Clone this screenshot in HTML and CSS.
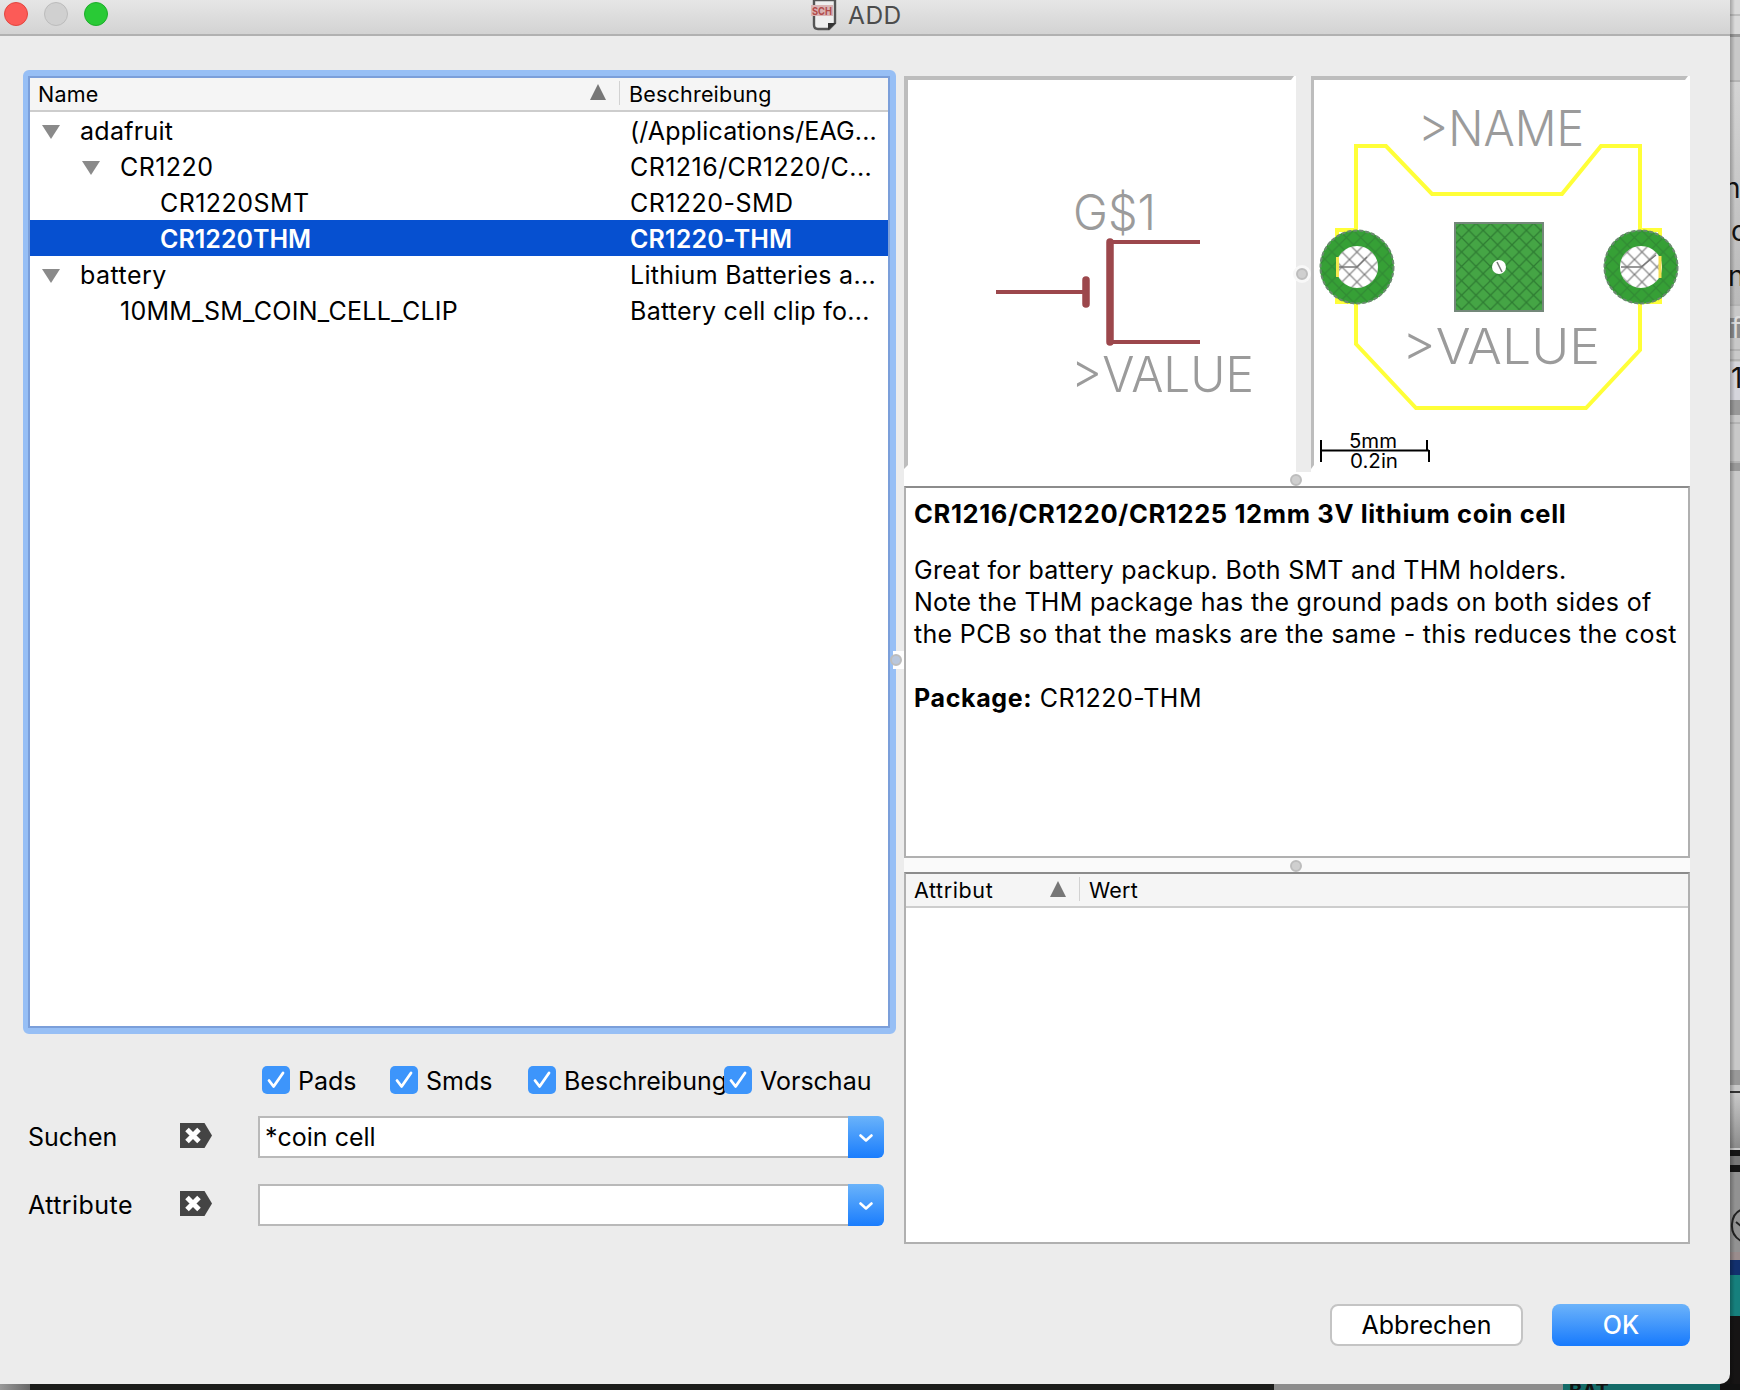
FILE: index.html
```html
<!DOCTYPE html>
<html lang="de">
<head>
<meta charset="utf-8">
<title>ADD</title>
<link rel="stylesheet" href="styles.css">
</head>
<body>
<svg class="defs" width="0" height="0" aria-hidden="true">
  <symbol id="check" viewBox="0 0 28 28"><path d="M7 14.5l4.600 6L21 7" fill="none" stroke="#fff" stroke-width="2.800" stroke-linecap="round" stroke-linejoin="round"/></symbol>
  <symbol id="clear" viewBox="0 0 32 25"><path d="M0 0h24.500l7.500 12.500-7.500 12.500H0z" fill="#444"/><path d="M7 6.500l12 12M19 6.500l-12 12" stroke="#fff" stroke-width="5"/></symbol>
  <symbol id="chevron" viewBox="0 0 14 9"><path d="M1.500 1.500L7 6.500l5.500-5" fill="none" stroke="#fff" stroke-width="2.600" stroke-linecap="round" stroke-linejoin="round"/></symbol>
  <symbol id="down" viewBox="0 0 18 14"><path d="M0 0h18L9 14z" fill="#8a8a8a"/></symbol>
  <symbol id="up" viewBox="0 0 16 16"><path d="M0 16h16L8 0z" fill="#777"/></symbol>
</svg>
<div class="desktop">
  <div class="window">
    <header class="titlebar">
      <div class="lights"><i class="light red"></i><i class="light idle"></i><i class="light green"></i></div>
      <div class="title">
        <svg width="26" height="31" viewBox="0 0 26 31"><path d="M3 0v25q0 4 4 4h11l6-6V0z" fill="#eee" stroke="#555" stroke-width="2.400"/><path d="M17 30v-7h8z" fill="#333"/><rect x="0" y="5" width="22" height="11" fill="#d9b3b3"/><text x="1" y="15" class="icon-label" textLength="20" lengthAdjust="spacingAndGlyphs">SCH</text></svg>
        <span>ADD</span>
      </div>
    </header>
    <main class="content">
      <section class="left">
        <div class="tree">
          <div class="tree-head"><span class="col-name">Name</span><svg class="sort" width="16" height="16"><use href="#up"/></svg><i class="sep"></i><span class="col-desc">Beschreibung</span></div>
          <div class="row"><span class="cell l0"><svg width="18" height="14"><use href="#down"/></svg><span class="mid">adafruit</span></span><span class="tight">(/Applications/EAG...</span></div>
          <div class="row"><span class="cell l1"><svg width="18" height="14"><use href="#down"/></svg><span class="wide">CR1220</span></span><span class="wide">CR1216/CR1220/C...</span></div>
          <div class="row"><span class="cell l2"><span class="wide">CR1220SMT</span></span><span class="wide">CR1220-SMD</span></div>
          <div class="row selected"><span class="cell l2"><span>CR1220THM</span></span><span class="tight">CR1220-THM</span></div>
          <div class="row"><span class="cell l0"><svg width="18" height="14"><use href="#down"/></svg><span class="wide">battery</span></span><span class="mid">Lithium Batteries a...</span></div>
          <div class="row"><span class="cell l3"><span class="mid">10MM_SM_COIN_CELL_CLIP</span></span><span class="mid">Battery cell clip fo...</span></div>
        </div>
        <div class="checks">
          <label><svg class="box"><use href="#check"/></svg>Pads</label>
          <label><svg class="box"><use href="#check"/></svg>Smds</label>
          <label><svg class="box"><use href="#check"/></svg>Beschreibung</label>
          <label><svg class="box"><use href="#check"/></svg>Vorschau</label>
        </div>
        <div class="field"><span class="field-label">Suchen</span><svg class="clear" width="32" height="25"><use href="#clear"/></svg><div class="combo"><span class="combo-text">*coin cell</span><span class="drop"><svg width="14" height="9"><use href="#chevron"/></svg></span></div></div>
        <div class="field"><span class="field-label wide">Attribute</span><svg class="clear" width="32" height="25"><use href="#clear"/></svg><div class="combo"><span class="combo-text"></span><span class="drop"><svg width="14" height="9"><use href="#chevron"/></svg></span></div></div>
      </section>
      <div class="split-main"><i class="knob"></i></div>
      <section class="right">
        <div class="previews">
          <div class="preview">
            <svg width="392" height="396" viewBox="904 76 392 396">
              <path d="M904 76h390l-3 4H908v385l-4 4z" fill="#bdbdbd"/>
              <g fill="none" stroke="#9c474c" stroke-width="4">
                <path d="M996 292h90M1110 242h90M1110 342h90"/>
                <path d="M1086 280v24M1110 242v100" stroke-width="7.500" stroke-linecap="round"/>
              </g>
              <text class="cad" x="1073" y="230" font-size="49" textLength="83" lengthAdjust="spacingAndGlyphs">G$1</text>
              <text class="cad" x="1071" y="392" font-size="49" textLength="183" lengthAdjust="spacingAndGlyphs">&gt;VALUE</text>
            </svg>
          </div>
          <div class="split-v"><i class="knob"></i></div>
          <div class="preview">
            <svg width="379" height="396" viewBox="1311 76 379 396">
              <defs>
                <pattern id="hatch" width="14.400" height="14.400" patternUnits="userSpaceOnUse"><path d="M0 0L14.400 14.400M14.400 0L0 14.400" stroke="#2f7d33" stroke-width="1.300"/></pattern>
                <pattern id="net" width="15" height="15" patternUnits="userSpaceOnUse" x="1349.500" y="259.500"><path d="M0 0L15 15M15 0L0 15" stroke="#777" stroke-width="1.200"/></pattern>
              </defs>
              <path d="M1311 76h377l-3 4H1314v385l-3 4z" fill="#bdbdbd"/>
              <g fill="none" stroke="#ffff38" stroke-width="4">
                <path d="M1356 146h30l46 48h130l39-48h39v204l-54 58h-170l-60-64z"/>
                <path d="M1356 230h-19v72h19M1640 230h20v72h-20"/>
              </g>
              <g>
                <circle cx="1357" cy="267" r="29" fill="#fff" stroke="#36a036" stroke-width="16"/>
                <circle cx="1357" cy="267" r="29" fill="none" stroke="url(#hatch)" stroke-width="15" opacity=".6"/>
                <circle cx="1357" cy="267" r="36.500" fill="none" stroke="#6b8a70" stroke-width="2" stroke-dasharray="4 2"/>
                <circle cx="1357" cy="267" r="21" fill="url(#net)"/>
                <path d="M1337 267h20l10-10" stroke="#777" stroke-width="1.300" fill="none"/>
                <path d="M1337.500 257v20" stroke="#f5e850" stroke-width="3"/>
                <circle cx="1641" cy="267" r="29" fill="#fff" stroke="#36a036" stroke-width="16"/>
                <circle cx="1641" cy="267" r="29" fill="none" stroke="url(#hatch)" stroke-width="15" opacity=".6"/>
                <circle cx="1641" cy="267" r="36.500" fill="none" stroke="#6b8a70" stroke-width="2" stroke-dasharray="4 2"/>
                <circle cx="1641" cy="267" r="21" fill="url(#net)"/>
                <path d="M1621 267h20l15-12" stroke="#777" stroke-width="1.300" fill="none"/>
                <path d="M1660 256v22" stroke="#f5df50" stroke-width="3"/>
              </g>
              <rect x="1455" y="223" width="88" height="88" fill="#45a545"/>
              <rect x="1455" y="223" width="88" height="88" fill="url(#hatch)" stroke="#74887a" stroke-width="2"/>
              <circle cx="1499" cy="267" r="7" fill="#fff"/><path d="M1497 262l5 10" stroke="#777" stroke-width="1.500"/>
              <text class="cad" x="1418" y="146" font-size="49" textLength="166" lengthAdjust="spacingAndGlyphs">&gt;NAME</text>
              <text class="cad" x="1402" y="364" font-size="49" textLength="198" lengthAdjust="spacingAndGlyphs">&gt;VALUE</text>
              <path d="M1321 440v22M1321 450.500h108M1427 440v11M1429 450v12" stroke="#000" stroke-width="2" fill="none"/>
              <text class="scale" x="1349" y="448" textLength="48" lengthAdjust="spacingAndGlyphs">5mm</text>
              <text class="scale" x="1350" y="468" textLength="48" lengthAdjust="spacingAndGlyphs">0.2in</text>
            </svg>
          </div>
        </div>
        <div class="split-h"><i class="knob"></i></div>
        <article class="info">
          <h1>CR1216/CR1220/CR1225 12mm 3V lithium coin cell</h1>
          <p>Great for battery packup. Both SMT and THM holders.<br>Note the THM package has the ground pads on both sides of<br><span class="last">the PCB so that the masks are the same - this reduces the cost</span></p>
          <p><b>Package:</b> <span class="wide">CR1220-THM</span></p>
        </article>
        <div class="split-h low"><i class="knob"></i></div>
        <div class="attrs"><div class="attrs-head"><span class="col-attr">Attribut</span><svg width="16" height="16"><use href="#up"/></svg><i class="sep"></i><span class="col-wert">Wert</span></div></div>
      </section>
    </main>
    <footer class="buttons"><button class="btn cancel">Abbrechen</button><button class="btn ok">OK</button></footer>
  </div>
  <svg class="side" width="10" height="1384" viewBox="1730 0 10 1384">
    <defs>
      <linearGradient id="g1" x2="0" y2="1"><stop offset="0" stop-color="#d4d4d4"/><stop offset="1" stop-color="#bababa"/></linearGradient>
      <linearGradient id="g2" x2="0" y2="1"><stop offset="0" stop-color="#c9c9c9"/><stop offset="1" stop-color="#8b8b8b"/></linearGradient>
      <linearGradient id="g3"><stop offset="0" stop-color="#000" stop-opacity=".25"/><stop offset="1" stop-color="#000" stop-opacity="0"/></linearGradient>
    </defs>
    <rect x="1730" width="10" height="1384" fill="#c9c9c9"/>
    <rect x="1730" y="0" width="10" height="34" fill="#dadada"/>
    <path d="M1730 15h10M1730 81h10M1730 305h10M1730 350h10M1730 360h10M1730 423h10M1730 462h10" stroke="#a0a0a0"/>
    <rect x="1730" y="34" width="10" height="3" fill="#999"/>
    <rect x="1730" y="82" width="10" height="222" fill="url(#g1)"/>
    <rect x="1730" y="318" width="10" height="20" fill="#8d8d8d"/>
    <rect x="1730" y="362" width="10" height="38" fill="#d5d5dc"/>
    <rect x="1730" y="400" width="10" height="15" fill="#999"/>
    <rect x="1730" y="463" width="10" height="8" fill="#999"/>
    <text class="behind" x="1724" y="198">n</text>
    <text class="behind" x="1731" y="241">c</text>
    <text class="behind" x="1728" y="286">n</text>
    <text class="behind pale" x="1731" y="338">fi</text>
    <text class="behind" x="1731" y="388">1</text>
    <rect x="1730" y="1070" width="10" height="15" fill="#999"/>
    <path d="M1730 1092h10" stroke="#333" stroke-width="2"/>
    <rect x="1730" y="1093" width="10" height="55" fill="url(#g2)"/>
    <rect x="1730" y="1150" width="10" height="22" fill="#151515"/><rect x="1730" y="1156" width="10" height="9" fill="#777"/>
    <rect x="1730" y="1172" width="10" height="80" fill="#929292"/>
    <path d="M1741 1210q-8 3-9 14t9 17M1736 1222l5 4" fill="none" stroke="#222" stroke-width="2"/>
    <rect x="1730" y="1252" width="10" height="8" fill="#9a8c8c"/>
    <rect x="1730" y="1260" width="10" height="15" fill="#12306e"/>
    <rect x="1730" y="1275" width="10" height="41" fill="#16807d"/>
    <rect x="1730" y="1316" width="10" height="68" fill="#161414"/>
    <rect x="1730" width="5" height="1384" fill="url(#g3)"/>
  </svg>
  <div class="below"><i class="b1"></i><i class="b2"></i><i class="b3"></i><span class="b4">BAT</span></div>
</div>
</body>
</html>
```
FILE: styles.css
```css
* { box-sizing: border-box; }
body { margin: 0; background: #161414; font-family: Inter, "Liberation Sans", sans-serif; font-size: 25px; color: #000; }
svg { display: block; flex: none; }
.defs { position: absolute; }
i { display: block; flex: none; }
.wide { letter-spacing: .45px; }
.mid { letter-spacing: .28px; }
.tight { letter-spacing: .14px; }

.desktop { width: 1740px; height: 1390px; display: grid; grid-template-columns: 1730px 10px; grid-template-rows: 1384px 6px; overflow: hidden; }
.window { background: #ececec; border-radius: 0 0 10px 0; display: flex; flex-direction: column; }
.below { grid-column: 1 / 3; display: flex; height: 6px; overflow: hidden; background: #111; }
.b1 { width: 30px; background: linear-gradient(90deg, #999, #666); }
.b2 { width: 1244px; background: #1b1c1a; }
.b3 { width: 289px; background: #8c8c8c; }
.b4 { width: 157px; padding-left: 6px; background: #136b68; color: #111; font-size: 20px; font-weight: 700; line-height: 14px; }

.titlebar { height: 36px; flex: none; display: grid; grid-template-columns: 811px 1fr; background: linear-gradient(#e6e6e6, #d3d3d3); border-bottom: 2px solid #b1b1b1; }
.lights { display: flex; gap: 16px; padding: 2px 0 0 4px; }
.light { width: 24px; height: 24px; border-radius: 50%; border: 1px solid; }
.red { background: #fc5b57; border-color: #e2463f; }
.idle { background: #d0d0d0; border-color: #bcbcbc; }
.green { background: #29ca36; border-color: #1dad2b; }
.title { display: flex; gap: 11px; color: #4c4c4c; font-size: 24.500px; letter-spacing: .5px; line-height: 31px; }
.icon-label { font-size: 11px; font-weight: 700; fill: #b34b4b; letter-spacing: 0; }

.content { display: grid; grid-template-columns: 873px 8px 786px; padding: 34px 0 0 23px; height: 1208px; flex: none; }
.left { display: flex; flex-direction: column; }
.tree { height: 964px; border: 6px solid #97bff5; border-left-width: 5px; border-radius: 6px; background: #fff; box-shadow: inset 0 0 0 2px #7b9fda; padding: 2px; flex: none; }
.tree-head, .attrs-head { display: flex; background: #f5f5f5; border-bottom: 2px solid #cdcdcd; font-size: 21.500px; letter-spacing: .2px; }
.tree-head { height: 34px; line-height: 33px; }
.col-name { width: 560px; padding-left: 8px; }
.sort { margin-top: 6px; }
.sep { width: 1px; height: 24px; margin: 3px 9px 0 13px; background: #d2d2d2; }
.row { height: 36px; display: grid; grid-template-columns: 600px 1fr; line-height: 38px; white-space: nowrap; }
.cell { display: flex; align-items: center; gap: 20px; }
.cell svg { margin-top: 1px; }
.l0 { padding-left: 12px; }
.l1 { padding-left: 52px; }
.l2 { padding-left: 130px; }
.l3 { padding-left: 90px; }
.selected { background: #0650d0; color: #fff; font-weight: 600; }

.checks { display: grid; grid-template-columns: 128px 138px 196px 160px; padding-left: 239px; margin-top: 32px; height: 50px; flex: none; }
.checks label { display: flex; gap: 8px; line-height: 30px; height: 28px; }
.box { width: 28px; height: 28px; border-radius: 5px; background: #3d95fb; position: relative; }
.field { display: flex; height: 42px; margin-bottom: 26px; line-height: 43px; flex: none; }
.field-label { width: 151px; padding-left: 5px; }
.clear { margin: 7px 0 0 6px; }
.combo { margin-left: 46px; width: 626px; display: flex; }
.combo-text { flex: 1; height: 42px; line-height: 39px; padding-left: 5px; background: #fff; border: 2px solid #b9b9b9; border-right: 0; }
.drop { width: 36px; border-radius: 0 6px 6px 0; background: linear-gradient(#6ab3fa, #1a7dfd); display: grid; place-items: center; padding-top: 2px; }

.knob { width: 12px; height: 12px; border-radius: 50%; background: #cfcfcf; border: 2px solid #bdbdbd; }
.split-main { height: 18px; margin-top: 581px; margin-left: -3px; width: 11px; display: flex; align-items: center; background: #fff; }
.split-main .knob { margin-left: -3px; background: #b9c7dc; }
.right { padding-top: 6px; display: flex; flex-direction: column; }
.previews { display: flex; height: 396px; flex: none; }
.preview { background: #fff; }
.split-v { width: 15px; display: flex; align-items: center; }
.split-v .knob { box-shadow: 0 0 0 3px #f8f8f8; }
.split-h { height: 14px; padding: 1px 3px 0 0; display: flex; justify-content: center; align-items: center; background: #fff; flex: none; }
.low { background: #fafafa; }
.cad { font-weight: 300; fill: #9b9b9b; }
.scale { font-size: 20px; fill: #000; }
.info { height: 372px; flex: none; background: #fff; border: 2px solid #b0b0b0; border-top-color: #8c8c8c; padding: 10px 0 0 8px; white-space: nowrap; line-height: 32px; letter-spacing: .28px; }
.info h1 { margin: 0 0 24px; font-size: 25.500px; line-height: 32px; font-weight: 700; letter-spacing: .64px; }
.info p { margin: 0 0 32px; }
.info b { letter-spacing: .65px; }
.last { letter-spacing: .32px; }
.attrs { height: 372px; flex: none; background: #fff; border: 2px solid #b0b0b0; border-top-color: #8c8c8c; }
.attrs-head { height: 34px; line-height: 33px; }
.attrs-head svg { margin-top: 7px; }
.col-attr { width: 144px; padding-left: 8px; letter-spacing: .6px; }

.buttons { display: flex; justify-content: flex-end; gap: 29px; padding: 60px 40px 0 0; }
.btn { height: 42px; font: inherit; padding: 0; border-radius: 8px; }
.cancel { width: 193px; background: #fff; border: 2px solid #c4c4c4; color: #000; }
.ok { width: 138px; border: 0; color: #fff; font-weight: 500; background: linear-gradient(#6cb3fa, #177afd); }
.behind { font-size: 28px; fill: #111; }
.pale { fill: #ddd; }
```
